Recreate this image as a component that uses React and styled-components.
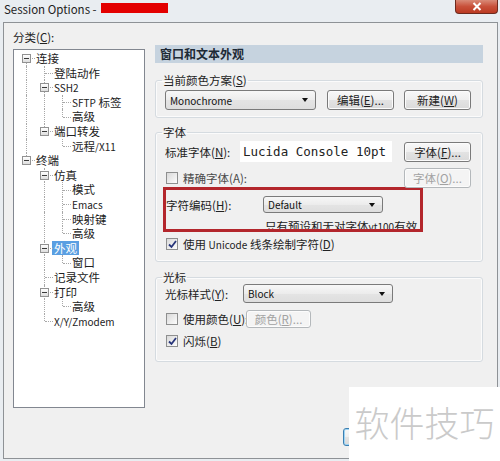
import React from "react";
import styled, { createGlobalStyle } from "styled-components";

const GlobalStyle = createGlobalStyle`
  html, body {
    margin: 0;
    padding: 0;
    background: #e9edf1;
  }
  body {
    font-family: "Noto Sans CJK SC", "Noto Sans", sans-serif;
    font-size: 11.5px;
    color: #222;
  }
`;

const tree = [
  {
    label: "连接",
    children: [
      { label: "登陆动作" },
      { label: "SSH2", children: [{ label: "SFTP 标签" }, { label: "高级" }] },
      { label: "端口转发", children: [{ label: "远程/X11" }] },
    ],
  },
  {
    label: "终端",
    children: [
      {
        label: "仿真",
        children: [{ label: "模式" }, { label: "Emacs" }, { label: "映射键" }, { label: "高级" }],
      },
      { label: "外观", selected: true, children: [{ label: "窗口" }] },
      { label: "记录文件" },
      { label: "打印", children: [{ label: "高级" }] },
      { label: "X/Y/Zmodem" },
    ],
  },
];

// flat rows, rails = which ancestor levels still have siblings below
const flatten = (nodes, rails = []) =>
  nodes.flatMap((n, i) => {
    const last = i === nodes.length - 1;
    const row = { ...n, rails, last, firstRoot: i === 0 && rails.length === 0 };
    return [row, ...(n.children ? flatten(n.children, [...rails, !last]) : [])];
  });

const rows = flatten(tree);

// latin runs are drawn smaller, like the dialog font next to the CJK glyphs
const Lat = styled.span`
  font-size: 10px;
`;

const withLatin = (text) =>
  text.split(/([A-Za-z0-9/]+)/).map((part, i) =>
    /^[A-Za-z0-9/]+$/.test(part) ? <Lat key={i}>{part}</Lat> : part
  );

const Window = styled.div`
  position: relative;
  width: 500px;
  height: 461px;
  overflow: hidden;
  display: flex;
  flex-direction: column;
`;

const TitleBar = styled.div`
  height: 22px;
  display: flex;
  align-items: flex-start;
  flex: none;
`;

const Title = styled.span`
  margin: 1px 0 0 4px;
  font-size: 11.5px;
  line-height: 16px;
  color: #222;
`;

const Redacted = styled.span`
  width: 67px;
  height: 10px;
  margin: 3px 0 0 4px;
  background: #e30000;
`;

const CloseBtn = styled.div`
  margin: 0 2px 0 auto;
  width: 43px;
  height: 14px;
  box-sizing: border-box;
  border: 1px solid #6d2a1e;
  border-top: none;
  border-radius: 0 0 4px 4px;
  background: linear-gradient(#d98a77, #c8503a 50%, #bb3a22);
  display: flex;
  align-items: center;
  justify-content: center;
`;

const Panel = styled.div`
  flex: none;
  height: 437px;
  margin: 0 2px 0 3px;
  box-sizing: border-box;
  border: 1px solid #8e9296;
  background: #f0f0f0;
  display: flex;
`;

const LeftCol = styled.div`
  width: 132px;
  margin-left: 9px;
  padding-top: 7px;
  display: flex;
  flex-direction: column;
`;

const CatLabel = styled.div`
  line-height: 14px;
  margin-bottom: 5px;
`;

const TreeBox = styled.div`
  height: 359px;
  box-sizing: border-box;
  border: 1px solid #828790;
  background: #fff;
  padding-top: 1px;
`;

const TreeRow = styled.div`
  display: flex;
  height: 14.6px;
  align-items: stretch;
`;

const Guide = styled.span`
  position: relative;
  flex: none;
  width: 18px;

  &::before {
    content: "";
    display: ${(p) => (p.$line ? "block" : "none")};
    position: absolute;
    left: 12px;
    top: ${(p) => (p.$line === "bottom" ? "50%" : "0")};
    bottom: ${(p) => (p.$line === "top" ? "50%" : "0")};
    border-left: 1px dotted #a8a8a8;
  }
  &::after {
    content: "";
    display: ${(p) => (p.$branch ? "block" : "none")};
    position: absolute;
    left: 13px;
    top: 50%;
    width: 8px;
    border-top: 1px dotted #a8a8a8;
  }
`;

const Expander = styled.span`
  position: absolute;
  z-index: 1;
  left: 8px;
  top: 50%;
  margin-top: -4px;
  width: 9px;
  height: 9px;
  box-sizing: border-box;
  border: 1px solid #929292;
  background: linear-gradient(#ffffff, #dedede);

  &::before {
    content: "";
    position: absolute;
    left: 1px;
    top: 3px;
    width: 5px;
    height: 1px;
    background: #3a3a3a;
  }
`;

const NodeText = styled.span`
  margin-left: 2px;
  padding: 0 2px;
  line-height: 14.6px;
  white-space: nowrap;
  background: ${(p) => (p.$selected ? "#5a9fe2" : "transparent")};
  color: ${(p) => (p.$selected ? "#fff" : "#222")};
`;

const RightCol = styled.div`
  width: 328px;
  margin-left: 10px;
  padding-top: 22px;
  display: flex;
  flex-direction: column;
`;

const Header = styled.div`
  height: 18px;
  line-height: 18px;
  padding-left: 5px;
  background: #c6d3df;
  font-weight: bold;
  font-size: 12px;
  color: #1e2a36;
`;

const Group = styled.fieldset`
  margin: ${(p) => p.$mt}px 0 0 0;
  padding: 0 11px ${(p) => p.$pb}px 9px;
  min-width: 0;
  border: 1px solid #d5dbe0;
  border-radius: 3px;
  box-shadow: inset 0 0 0 1px #fbfbfb;
`;

const Legend = styled.legend`
  padding: 0 1px;
  margin-left: -3px;
  line-height: 14px;
`;

const Row = styled.div`
  display: flex;
  align-items: center;
  height: ${(p) => p.$h}px;
  margin-top: ${(p) => p.$mt || 0}px;
  white-space: nowrap;
`;

const Label = styled.span`
  flex: none;
  width: ${(p) => (p.$w ? `${p.$w}px` : "auto")};
  color: ${(p) => (p.$dim ? "#4a4a4a" : "inherit")};
`;

const U = styled.u`
  text-underline-offset: 1px;
`;

const Select = styled.div`
  flex: none;
  display: flex;
  align-items: center;
  box-sizing: border-box;
  width: ${(p) => p.$w}px;
  height: ${(p) => p.$h}px;
  padding: 0 0 0 4px;
  border: 1px solid #7a7a7a;
  border-radius: 3px;
  background: linear-gradient(#f7f7f7, #ececec 50%, #e4e4e4 51%, #dedede);
  font-size: 10px;
  color: #111;
`;

const Arrow = styled.span`
  margin: 0 7px 0 auto;
  border-left: 3.5px solid transparent;
  border-right: 3.5px solid transparent;
  border-top: 4px solid #111;
`;

const Button = styled.button`
  flex: none;
  box-sizing: border-box;
  width: ${(p) => p.$w || 67}px;
  height: ${(p) => p.$h || 20}px;
  margin-left: ${(p) => (p.$ml === "auto" ? "auto" : `${p.$ml || 0}px`)};
  padding: 0;
  font: inherit;
  border: 1px solid ${(p) => (p.$default ? "#3c7fb1" : p.disabled ? "#b4b8bb" : "#7a7a7a")};
  border-radius: 3px;
  background: ${(p) =>
    p.disabled
      ? "#f4f4f4"
      : "linear-gradient(#f8f8f8, #efefef 50%, #e3e3e3 51%, #dadada)"};
  color: ${(p) => (p.disabled ? "#a2a2a2" : "#222")};
  box-shadow: ${(p) => (p.$default ? "inset 0 0 0 1px #9fd5f5" : "inset 0 0 0 1px #fcfcfc")};
`;

const FontField = styled.div`
  flex: none;
  width: 152px;
  height: 21px;
  box-sizing: border-box;
  padding-left: 3px;
  background: #fff;
  font-family: "DejaVu Sans Mono", "Liberation Mono", monospace;
  font-size: 12.5px;
  line-height: 21px;
  color: #222;
`;

const Box = styled.span`
  flex: none;
  width: 12px;
  height: 12px;
  box-sizing: border-box;
  margin: 0 5px 0 1px;
  border: 1px solid #8e8f8f;
  background: linear-gradient(135deg, #d9d9d9, #fdfdfd);
  display: flex;
  align-items: center;
  justify-content: center;
`;

const Highlight = styled.div`
  margin: -1px 0 0 -2px;
  width: 260px;
  height: 45px;
  box-sizing: border-box;
  border: 3px solid #b3262c;
  overflow: hidden;
`;

const Note = styled.div`
  margin-top: 6px;
  padding-left: 99px;
  line-height: 14px;
  white-space: nowrap;
`;

const ButtonBar = styled.div`
  display: flex;
  justify-content: flex-end;
  gap: 6px;
  margin-top: 66px;
`;

const Watermark = styled.div`
  position: absolute;
  right: 0;
  bottom: 0;
  width: 151px;
  height: 74px;
  background: #fff;
  display: flex;
  align-items: center;
  justify-content: center;
  padding-bottom: 6px;
  box-sizing: border-box;
  font-size: 35px;
  font-weight: 300;
  color: #cacaca;
`;

const Check = ({ checked }) => (
  <Box>
    {checked && (
      <svg width="9" height="9" viewBox="0 0 9 9">
        <path d="M1 4.5 L3.5 7 L8 1" fill="none" stroke="#27357a" strokeWidth="1.8" />
      </svg>
    )}
  </Box>
);

const Tree = () => (
  <TreeBox>
    {rows.map((r, i) => {
      const own = r.firstRoot && !r.last ? "bottom" : r.last ? "top" : "full";
      return (
        <TreeRow key={i}>
          {r.rails.map((on, j) => (
            <Guide key={j} $line={on ? "full" : null} />
          ))}
          <Guide $line={own} $branch>
            {r.children && <Expander />}
          </Guide>
          <NodeText $selected={r.selected}>{withLatin(r.label)}</NodeText>
        </TreeRow>
      );
    })}
  </TreeBox>
);

export default function App() {
  return (
    <Window>
      <GlobalStyle />
      <TitleBar>
        <Title>Session Options -</Title>
        <Redacted />
        <CloseBtn>
          <svg width="10" height="9" viewBox="0 0 10 9">
            <path d="M1.5 1 L8.5 8 M8.5 1 L1.5 8" stroke="#fff" strokeWidth="2" />
          </svg>
        </CloseBtn>
      </TitleBar>

      <Panel>
        <LeftCol>
          <CatLabel>
            分类(<U>C</U>):
          </CatLabel>
          <Tree />
        </LeftCol>

        <RightCol>
          <Header>窗口和文本外观</Header>

          <Group $mt={10} $pb={7}>
            <Legend>
              当前颜色方案(<U>S</U>)
            </Legend>
            <Row $h={20} $mt={3}>
              <Select $w={151} $h={20}>
                Monochrome
                <Arrow />
              </Select>
              <Button $ml={11}>
                编辑(<U>E</U>)...
              </Button>
              <Button $ml={10}>
                新建(<U>W</U>)
              </Button>
            </Row>
          </Group>

          <Group $mt={7} $pb={9}>
            <Legend>字体</Legend>
            <Row $h={21} $mt={2}>
              <Label $w={75}>
                标准字体(<U>N</U>):
              </Label>
              <FontField>Lucida Console 10pt</FontField>
              <Button $ml="auto">
                字体(<U>F</U>)...
              </Button>
            </Row>
            <Row $h={20} $mt={6}>
              <Check />
              <Label $dim>精确字体(A):</Label>
              <Button $ml="auto" disabled>
                字体(<U>O</U>)...
              </Button>
            </Row>
            <Highlight>
              <Row $h={17} $mt={6}>
                <Label $w={97}>
                  字符编码(<U>H</U>):
                </Label>
                <Select $w={120} $h={17}>
                  Default
                  <Arrow />
                </Select>
              </Row>
              <Note>{withLatin("只有预设和无对字体vt100有效")}</Note>
            </Highlight>
            <Row $h={16} $mt={4}>
              <Check checked />
              <Label>
                使用 <Lat>Unicode</Lat> 线条绘制字符(<U>D</U>)
              </Label>
            </Row>
          </Group>

          <Group $mt={8} $pb={12}>
            <Legend>光标</Legend>
            <Row $h={19}>
              <Label $w={78}>
                光标样式(<U>Y</U>):
              </Label>
              <Select $w={150} $h={19}>
                Block
                <Arrow />
              </Select>
            </Row>
            <Row $h={18} $mt={7}>
              <Check />
              <Label $w={63}>
                使用颜色(<U>U</U>):
              </Label>
              <Button disabled $w={65} $h={18}>
                颜色(<U>R</U>)...
              </Button>
            </Row>
            <Row $h={16} $mt={5}>
              <Check checked />
              <Label>
                闪烁(<U>B</U>)
              </Label>
            </Row>
          </Group>

          <ButtonBar>
            <Button $default $h={18} aria-label="确定" />
            <Button $h={18} aria-label="取消" />
          </ButtonBar>
        </RightCol>
      </Panel>

      <Watermark>软件技巧</Watermark>
    </Window>
  );
}
